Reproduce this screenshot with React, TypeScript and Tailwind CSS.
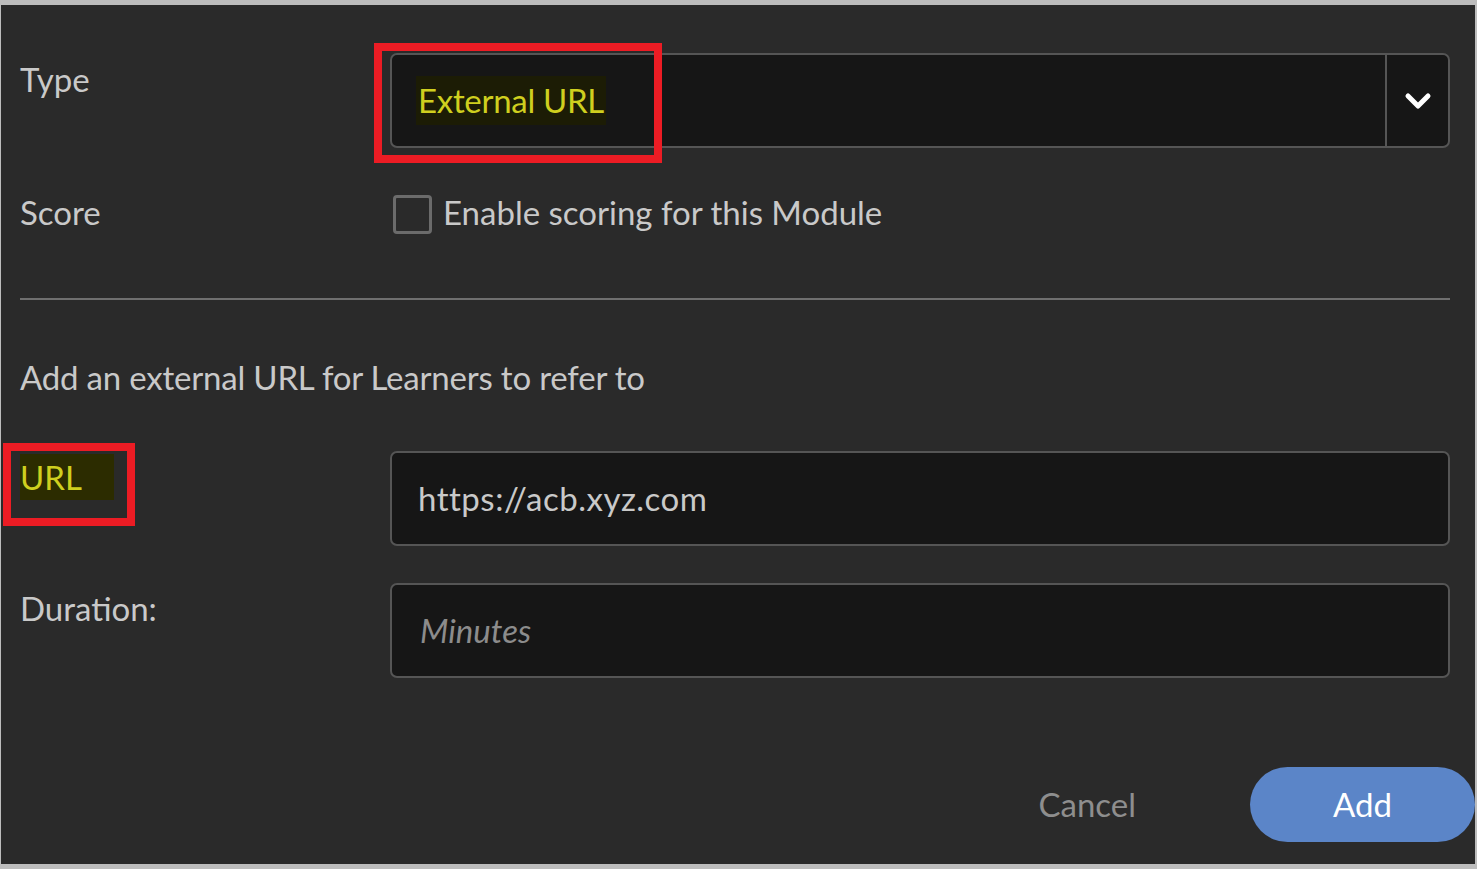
import { ChevronDown } from 'lucide-react';

const font = { fontFamily: 'Lato, "Liberation Sans", sans-serif' };

export default function App() {
  return (
    <main
      className="w-[1477px] h-[869px] bg-[#bdbdbd] pt-[5px] pl-[1px] pr-[2px] pb-[5px] overflow-hidden"
      style={font}
    >
      <div className="relative w-full h-full bg-[#2a2a2a] text-[#c9c9c9] text-[33px] leading-none flex flex-col">
        {/* Type */}
        <div className="flex mt-[48px] pl-[19px] pr-[25px]">
          <div className="w-[370px] pt-[10px]">Type</div>
          <div className="flex-1 h-[95px] flex bg-[#161616] border-2 border-[#555555] rounded-[7px]">
            <div className="flex-1 flex items-center pl-[24px]">
              <span className="bg-[#1c1c05] text-[#cfcf1f] px-[2px] py-[8px] tracking-[-0.3px]">External URL</span>
            </div>
            <div className="w-[63px] border-l-2 border-[#555555] flex items-center justify-center">
              <ChevronDown className="size-[40px] text-white" strokeWidth={3} />
            </div>
          </div>
        </div>

        {/* Score */}
        <div className="flex mt-[47px] pl-[19px] pr-[25px] items-center">
          <div className="w-[373px] -mt-[5px]">Score</div>
          <div className="flex items-center gap-[11px]">
            <div className="size-[39px] border-[3px] border-[#6b6b6b] rounded-[4px]" />
            <span className="-mt-[5px]">Enable scoring for this Module</span>
          </div>
        </div>

        <div className="ml-[19px] mr-[25px] mt-[64px] h-[2px] bg-[#6f6f6f]" />

        <div className="pl-[19px] mt-[61px] tracking-[-0.2px]">Add an external URL for Learners to refer to</div>

        {/* URL */}
        <div className="flex mt-[57px] pl-[19px] pr-[25px]">
          <div className="w-[370px] pt-[10px]">
            <span className="bg-[#2c2c00] text-[#cfcf1f] pr-[32px] py-[3px]">URL</span>
          </div>
          <div className="flex-1 h-[95px] flex items-center bg-[#161616] border-2 border-[#555555] rounded-[7px] pl-[26px] tracking-[0.5px]">
            https://acb.xyz.com
          </div>
        </div>

        {/* Duration */}
        <div className="flex mt-[37px] pl-[19px] pr-[25px]">
          <div className="w-[370px] pt-[9px]">Duration:</div>
          <div className="flex-1 h-[95px] flex items-center bg-[#161616] border-2 border-[#555555] rounded-[7px] pl-[28px] italic text-[#8c8c8c]">
            Minutes
          </div>
        </div>

        {/* Footer */}
        <div className="flex items-center justify-end mt-[89px]">
          <button className="text-[#8e8e8e] mr-[114px]">Cancel</button>
          <button className="w-[225px] h-[75px] rounded-full bg-[#5b85c8] text-white">Add</button>
        </div>

        {/* annotation boxes */}
        <div className="absolute left-[373px] top-[38px] w-[288px] h-[120px] border-[8px] border-[#ec1c24]" />
        <div className="absolute left-[2px] top-[438px] w-[132px] h-[83px] border-[8px] border-[#ec1c24]" />
      </div>
    </main>
  );
}
